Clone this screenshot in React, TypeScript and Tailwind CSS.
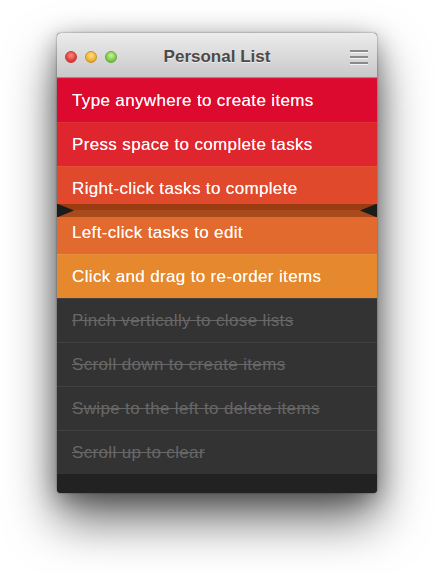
import React from "react";

const colored = [
  { text: "Type anywhere to create items", bg: "bg-[#dd0a2f]" },
  { text: "Press space to complete tasks", bg: "bg-[#df262e]" },
  { text: "Right-click tasks to complete", bg: "bg-[#e1492c]" },
  { text: "Left-click tasks to edit", bg: "bg-[#e26a2e]" },
  { text: "Click and drag to re-order items", bg: "bg-[#e5882e]" },
];

const done = [
  "Pinch vertically to close lists",
  "Scroll down to create items",
  "Swipe to the left to delete items",
  "Scroll up to clear",
];

export default function App() {
  return (
    <div
      className="w-[434px] h-[574px] bg-white flex justify-center pt-[33px]"
      style={{ fontFamily: '"Liberation Sans", Arial, sans-serif' }}
    >
      <div className="w-[320px] h-[460px] rounded-[4px] overflow-hidden flex flex-col bg-[#222] shadow-[0_26px_50px_rgba(0,0,0,0.6),0_6px_24px_rgba(0,0,0,0.35),0_0_2px_rgba(0,0,0,0.5)] relative">
        {/* title bar */}
        <div className="h-[45px] shrink-0 bg-gradient-to-b from-[#ececec] to-[#c9c9c9] border-b border-[#8e8e8e] flex items-center relative pt-[3px]">
          <div className="flex items-center gap-[8px] pl-[8px]">
            <span className="w-[12px] h-[12px] rounded-full bg-[radial-gradient(circle_at_50%_35%,#ff8a85,#e0403a_60%,#b8302b)] border border-[#c23a34]" />
            <span className="w-[12px] h-[12px] rounded-full bg-[radial-gradient(circle_at_50%_35%,#ffe08a,#f0b333_60%,#c88c1c)] border border-[#c7962b]" />
            <span className="w-[12px] h-[12px] rounded-full bg-[radial-gradient(circle_at_50%_35%,#c6f59a,#7fcb4b_60%,#5c9f32)] border border-[#6ca740]" />
          </div>
          <div className="absolute inset-0 pt-[3px] flex items-center justify-center pointer-events-none">
            <span className="text-[17px] font-bold text-[#4a4a4a] [text-shadow:0_1px_0_rgba(255,255,255,0.6)]">
              Personal List
            </span>
          </div>
          <div className="ml-auto mr-[9px] flex flex-col gap-[4px] pt-[1px]">
            <span className="block w-[18px] h-[2px] bg-[#8a8a8a] shadow-[0_1px_0_rgba(255,255,255,0.7)]" />
            <span className="block w-[18px] h-[2px] bg-[#8a8a8a] shadow-[0_1px_0_rgba(255,255,255,0.7)]" />
            <span className="block w-[18px] h-[2px] bg-[#8a8a8a] shadow-[0_1px_0_rgba(255,255,255,0.7)]" />
          </div>
        </div>

        {/* list */}
        <div className="flex flex-col relative">
          {colored.map((r) => (
            <div
              key={r.text}
              className={`h-[44px] shrink-0 flex items-center pl-[15px] ${r.bg} border-t border-white/5`}
            >
              <span className="text-[17px] text-white/95 tracking-[0.35px] [text-shadow:0_0_0.4px_rgba(255,255,255,0.8)]">
                {r.text}
              </span>
            </div>
          ))}
          {done.map((t) => (
            <div
              key={t}
              className="h-[44px] shrink-0 flex items-center pl-[15px] bg-[#333333] border-t border-[#414141]"
            >
              <span className="text-[17px] text-[#676767] line-through decoration-[#676767] tracking-[0.35px]">
                {t}
              </span>
            </div>
          ))}

          {/* pinch gap overlay */}
          <div className="absolute left-0 right-0 top-[126px] h-[13px] flex flex-col">
            <div className="h-[6px] bg-[#9a3b12]" />
            <div className="h-[7px] bg-[#a84a1c]" />
            <svg className="absolute left-0 top-0" width="17" height="13" viewBox="0 0 17 13">
              <polygon points="0,0 1,0 17,6.5 1,13 0,13" fill="#1c1c1c" />
            </svg>
            <svg className="absolute right-0 top-0" width="17" height="13" viewBox="0 0 17 13">
              <polygon points="17,0 16,0 0,6.5 16,13 17,13" fill="#1c1c1c" />
            </svg>
          </div>
        </div>

        {/* footer */}
        <div className="flex-1 bg-[#222222]" />
      </div>
    </div>
  );
}
